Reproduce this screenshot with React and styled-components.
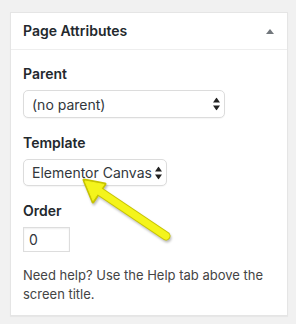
import React from 'react';
import styled, { createGlobalStyle } from 'styled-components';

const GlobalStyle = createGlobalStyle`
  html, body {
    margin: 0;
    padding: 0;
    background: #f1f1f1;
  }
  body {
    font-family: Inter, "Noto Sans", "Liberation Sans", sans-serif;
    color: #23282d;
  }
`;

const Page = styled.div`
  position: relative;
  width: 296px;
  height: 324px;
  padding: 12px 8px 0 10px;
  box-sizing: border-box;
`;

const Postbox = styled.div`
  width: 278px;
  height: 304px;
  box-sizing: border-box;
  background: #fff;
  border: 1px solid #e5e5e5;
  box-shadow: 0 1px 1px rgba(0, 0, 0, 0.04);
  display: flex;
  flex-direction: column;
`;

const Header = styled.div`
  height: 36px;
  display: flex;
  align-items: center;
  justify-content: space-between;
  padding: 0 13px 0 12px;
  border-bottom: 1px solid #eee;
  flex-shrink: 0;

  h2 {
    margin: 0;
    font-size: 14px;
    font-weight: 600;
    line-height: 1.4;
    color: #23282d;
  }
`;

const Inside = styled.div`
  padding: 14px 12px 12px;
  display: flex;
  flex-direction: column;
  align-items: flex-start;
`;

const Label = styled.div`
  font-size: 14px;
  font-weight: 600;
  line-height: 19px;
  color: #23282d;
  margin-top: ${({ first }) => (first ? '0' : '15px')};
  margin-bottom: 7px;
`;

const SelectWrap = styled.div`
  position: relative;
  width: ${({ width }) => width}px;
  height: ${({ height }) => height}px;

  svg {
    position: absolute;
    right: 5px;
    top: 50%;
    transform: translateY(-50%);
    pointer-events: none;
  }
`;

const Select = styled.select`
  appearance: none;
  -webkit-appearance: none;
  width: 100%;
  height: 100%;
  margin: 0;
  box-sizing: border-box;
  border: 1px solid #dcdcdc;
  border-radius: 5px;
  background: #fff;
  box-shadow: 0 1px 1px rgba(0, 0, 0, 0.04);
  padding: 0 4px 0 8px;
  font-family: Inter, "Noto Sans", "Liberation Sans", sans-serif;
  font-size: 14px;
  color: #32373c;
  outline: none;
`;

const NumberInput = styled.input`
  width: 47px;
  height: 25px;
  margin: 0;
  box-sizing: border-box;
  border: 1px solid #ddd;
  box-shadow: inset 0 1px 2px rgba(0, 0, 0, 0.07);
  padding: 0 5px;
  font-family: Inter, "Noto Sans", "Liberation Sans", sans-serif;
  font-size: 14px;
  color: #32373c;
  outline: none;
`;

const Help = styled.p`
  margin: 14px 0 0;
  font-size: 13px;
  line-height: 19px;
  color: #444;
`;

const Overlay = styled.svg`
  position: absolute;
  left: 0;
  top: 0;
  pointer-events: none;
  filter: drop-shadow(1px 2px 1px rgba(0, 0, 0, 0.25));
`;

const Arrows = () => (
  <svg width="7" height="13" viewBox="0 0 7 13">
    <polygon points="3.5,0 7,5 0,5" fill="#222" />
    <polygon points="0,8 7,8 3.5,13" fill="#222" />
  </svg>
);

const Dropdown = ({ width, height = 28, value }) => (
  <SelectWrap width={width} height={height}>
    <Select defaultValue={value}>
      <option value={value}>{value}</option>
    </Select>
    <Arrows />
  </SelectWrap>
);

export default function App() {
  return (
    <Page>
      <GlobalStyle />
      <Postbox>
        <Header>
          <h2>Page Attributes</h2>
          <svg width="8" height="5" viewBox="0 0 8 5">
            <polygon points="4,0 8,5 0,5" fill="#72777c" />
          </svg>
        </Header>
        <Inside>
          <Label first>Parent</Label>
          <Dropdown width={202} value="(no parent)" />
          <Label>Template</Label>
          <Dropdown width={144} height={27} value="Elementor Canvas" />
          <Label>Order</Label>
          <NumberInput type="text" defaultValue="0" />
          <Help>Need help? Use the Help tab above the screen title.</Help>
        </Inside>
      </Postbox>
      <Overlay width="296" height="324" viewBox="0 0 296 324">
        <line x1="166" y1="236" x2="99" y2="191" stroke="#c7c300" strokeWidth="9" strokeLinecap="round" />
        <polygon points="84,180 105,184 93,202" fill="#c7c300" stroke="#c7c300" strokeWidth="3" strokeLinejoin="round" />
        <line x1="166" y1="236" x2="99" y2="191" stroke="#f4f41c" strokeWidth="7" strokeLinecap="round" />
        <polygon points="85,181 104,184.5 93,200.5" fill="#f4f41c" stroke="#f4f41c" strokeWidth="1" strokeLinejoin="round" />
      </Overlay>
    </Page>
  );
}
